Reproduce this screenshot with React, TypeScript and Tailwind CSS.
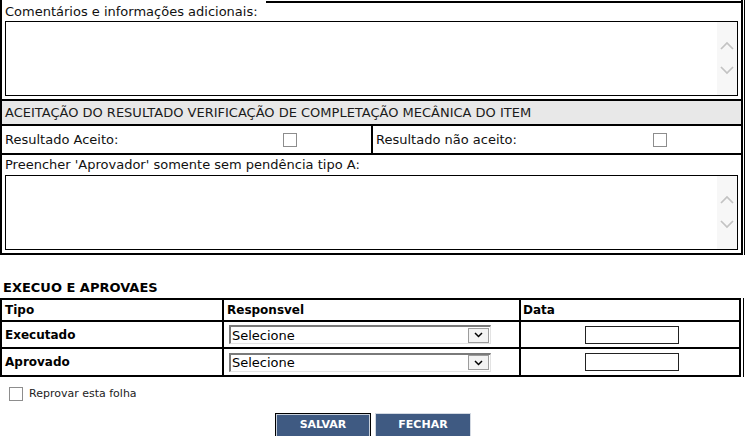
import React from "react";

const Scroller = () => (
  <div className="flex h-full w-[20px] flex-col items-center bg-[#f7f7f7] pt-[19px]">
    <svg width="14" height="9" viewBox="0 0 14 9" className="block">
      <polyline points="1,8 7,2 13,8" fill="none" stroke="#c3c3c3" strokeWidth="1.7" />
    </svg>
    <svg width="14" height="9" viewBox="0 0 14 9" className="mt-[16px] block">
      <polyline points="1,1 7,7 13,1" fill="none" stroke="#c3c3c3" strokeWidth="1.7" />
    </svg>
  </div>
);

const TextBox = () => (
  <div className="flex h-[75px] w-[733px] border border-black bg-white">
    <textarea className="h-full flex-1 resize-none bg-transparent outline-none" />
    <Scroller />
  </div>
);

const Check = ({ className = "" }: { className?: string }) => (
  <input
    type="checkbox"
    className={`block h-[14px] w-[14px] appearance-none border border-[#8d8d8d] bg-white ${className}`}
  />
);

const Selecione = () => (
  <div className="ml-[5px] flex h-[19px] w-[262px] items-center border-l-2 border-t-2 border-b border-r border-l-[#7a7a7a] border-t-[#7a7a7a] border-b-[#e3e3e3] border-r-[#e3e3e3] bg-white">
    <span className="flex-1 pl-[1px] text-[13px] leading-[15px] text-black">Selecione</span>
    <span className="mr-[1px] flex h-[15px] w-[21px] items-center justify-center border border-[#9c9c9c] bg-[#f3f3f3]">
      <svg width="9" height="6" viewBox="0 0 9 6">
        <polyline points="1,1 4.5,4.5 8,1" fill="none" stroke="#000" strokeWidth="1.5" />
      </svg>
    </span>
  </div>
);

const DateBox = () => <input type="text" className="block h-[18px] w-[94px] border border-[#222] bg-white outline-none" />;

export default function App() {
  return (
    <div className="w-[745px] bg-white font-['DejaVu_Sans',Verdana,sans-serif] text-[13px] text-[#111]">
      {/* bloco de aceitação */}
      <div className="w-[745px] border-r border-black pr-px">
        <div className="w-[743px] border-x-2 border-b-2 border-black">
          <div className="px-[3px] pb-[3px]">
            <div className="flex h-[21px]">
              <span className="pt-[4px] leading-[15px]">Comentários e informações adicionais:</span>
              <div className="-mr-[3px] ml-[8px] mt-px h-0 flex-1 border-t-2 border-black" />
            </div>
            <TextBox />
          </div>
          <div className="flex h-[27px] items-center border-y-2 border-black bg-[#e8e8e8] pl-[3px] text-[#1a1a1a]">
            ACEITAÇÃO DO RESULTADO VERIFICAÇÃO DE COMPLETAÇÃO MECÂNICA DO ITEM
          </div>
          <div className="flex h-[29px] border-b-2 border-black">
            <div className="flex w-[371px] items-center border-r-2 border-black pl-[3px]">
              <span className="w-[278px]">Resultado Aceito:</span>
              <Check />
            </div>
            <div className="flex flex-1 items-center pl-[3px]">
              <span className="w-[277px]">Resultado não aceito:</span>
              <Check />
            </div>
          </div>
          <div className="px-[3px] pb-[3px]">
            <div className="flex h-[20px] items-center">Preencher 'Aprovador' somente sem pendência tipo A:</div>
            <TextBox />
          </div>
        </div>
      </div>

      {/* execução e aprovações */}
      <div className="mt-[25px] pl-[3px] font-bold leading-[15px] text-black">EXECUO E APROVAES</div>
      <div className="mt-[3px] w-[744px] border-r border-black pr-[2px] text-[12px]">
        <div className="w-[741px] border-2 border-black text-black">
          <div className="flex h-[22px] border-b-2 border-black font-bold">
            <div className="flex w-[222px] items-center border-r-2 border-black pl-[3px]">Tipo</div>
            <div className="flex w-[297px] items-center border-r-2 border-black pl-[3px]">Responsvel</div>
            <div className="flex flex-1 items-center pl-[2px]">Data</div>
          </div>
          <div className="flex h-[27px] border-b-2 border-black">
            <div className="flex w-[222px] items-center border-r-2 border-black pl-[3px] font-bold">Executado</div>
            <div className="flex w-[297px] items-center border-r-2 border-black">
              <Selecione />
            </div>
            <div className="flex flex-1 items-center justify-center pl-[4px]">
              <DateBox />
            </div>
          </div>
          <div className="flex h-[26px]">
            <div className="flex w-[222px] items-center border-r-2 border-black pl-[3px] font-bold">Aprovado</div>
            <div className="flex w-[297px] items-center border-r-2 border-black">
              <Selecione />
            </div>
            <div className="flex flex-1 items-center justify-center pl-[4px]">
              <DateBox />
            </div>
          </div>
        </div>
      </div>

      <label className="mt-[9px] flex items-center pl-[9px] text-[11px] text-[#222]">
        <Check className="mr-[6px]" />
        Reprovar esta folha
      </label>

      <div className="mt-[10px] flex justify-center gap-[4px] pl-px">
        <button className="h-[25px] w-[96px] border border-black bg-[#3f5a82] text-[11px] font-bold text-white shadow-[inset_0_0_0_1px_#c9d1dc]">
          SALVAR
        </button>
        <button className="h-[25px] w-[96px] border border-[#d3d9e2] bg-[#3f5a82] text-[11px] font-bold text-white">
          FECHAR
        </button>
      </div>
    </div>
  );
}
